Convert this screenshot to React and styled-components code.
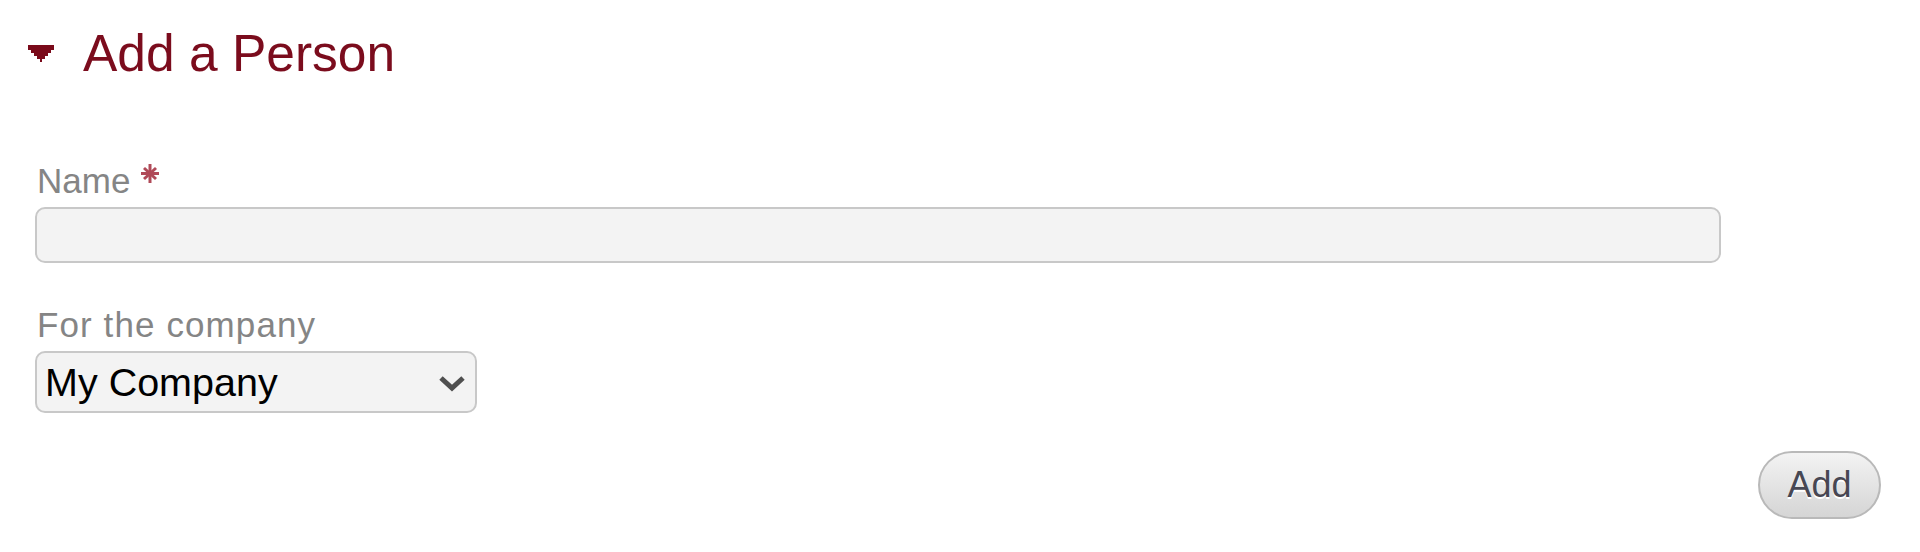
import styled, { createGlobalStyle } from 'styled-components';

const GlobalStyle = createGlobalStyle`
  body {
    margin: 0;
    background: #fff;
    font-family: 'Liberation Sans', Arial, sans-serif;
  }
`;

const Header = styled.div`
  display: flex;
  align-items: center;
  gap: 29px;
  margin-top: 23px;
  padding-left: 28px;
  height: 60px;
`;

const Title = styled.h2`
  margin: 0;
  font-size: 51.5px;
  font-weight: 400;
  line-height: 60px;
  color: #7b0c1d;
`;

const Form = styled.form`
  display: flex;
  flex-direction: column;
  gap: 42px;
  padding: 78px 39px 0 35px;
`;

const Field = styled.div`
  display: flex;
  flex-direction: column;
  gap: 6px;
`;

const Label = styled.label`
  display: flex;
  align-items: flex-start;
  gap: 11px;
  font-size: 35px;
  line-height: 40px;
  color: #858585;
  padding-left: 2px;
  letter-spacing: ${p => (p.$wide ? '1.1px' : '0')};
`;

const Required = styled.svg`
  margin-top: 3px;
`;

const TextInput = styled.input`
  box-sizing: border-box;
  width: 1686px;
  height: 56px;
  background: #f3f3f3;
  border: 2px solid #c8c8c8;
  border-radius: 10px;
  font: inherit;
  font-size: 34px;
  padding: 0 10px;
  outline: none;
`;

const SelectWrap = styled.div`
  position: relative;
  width: 442px;
`;

const Select = styled.select`
  box-sizing: border-box;
  appearance: none;
  width: 100%;
  height: 62px;
  background: #f3f3f3;
  border: 2px solid #c8c8c8;
  border-radius: 10px;
  font-family: 'Liberation Sans', Arial, sans-serif;
  font-size: 39.5px;
  color: #000;
  padding: 0 50px 0 8px;
  outline: none;
`;

const Chevron = styled.svg`
  position: absolute;
  right: 11px;
  top: 23px;
  pointer-events: none;
`;

const Actions = styled.div`
  display: flex;
  justify-content: flex-end;
  margin-top: -4px;
`;

const Button = styled.button`
  box-sizing: border-box;
  width: 123px;
  height: 68px;
  border-radius: 34px;
  border: 2px solid #b9b9b9;
  background: linear-gradient(#f3f3f3, #d5d5d5);
  font-family: 'Liberation Sans', Arial, sans-serif;
  font-size: 36px;
  color: #474753;
  text-shadow: 0 2px 0 #fff;
  cursor: pointer;
`;

function DisclosureArrow() {
  return (
    <svg width="26" height="17" viewBox="0 0 26 17">
      <polygon
        fill="#7a0a1a"
        points="0,0 26,0 26,5 23,5 23,8 20,8 20,11 17,11 17,14 14,14 14,17 12,17 12,14 9,14 9,11 6,11 6,8 3,8 3,5 0,5"
      />
    </svg>
  );
}

export default function App() {
  return (
    <>
      <GlobalStyle />
      <Header>
        <DisclosureArrow />
        <Title>Add a Person</Title>
      </Header>
      <Form onSubmit={e => e.preventDefault()}>
        <Field>
          <Label htmlFor="name">
            Name
            <Required width="18" height="19" viewBox="0 0 18 19">
              <g stroke="#b04a58" strokeWidth="3" strokeLinecap="butt">
                <line x1="9" y1="0" x2="9" y2="19" />
                <line x1="0" y1="9.5" x2="18" y2="9.5" />
                <line x1="3" y1="4" x2="15" y2="15" />
                <line x1="15" y1="4" x2="3" y2="15" />
              </g>
            </Required>
          </Label>
          <TextInput id="name" type="text" />
        </Field>
        <Field>
          <Label htmlFor="company" $wide>
            For the company
          </Label>
          <SelectWrap>
            <Select id="company" defaultValue="my">
              <option value="my">My Company</option>
            </Select>
            <Chevron width="28" height="18" viewBox="0 0 28 18">
              <polyline
                points="3,4 14,14 25,4"
                fill="none"
                stroke="#4f4f4f"
                strokeWidth="5"
              />
            </Chevron>
          </SelectWrap>
        </Field>
        <Actions>
          <Button type="submit">Add</Button>
        </Actions>
      </Form>
    </>
  );
}
